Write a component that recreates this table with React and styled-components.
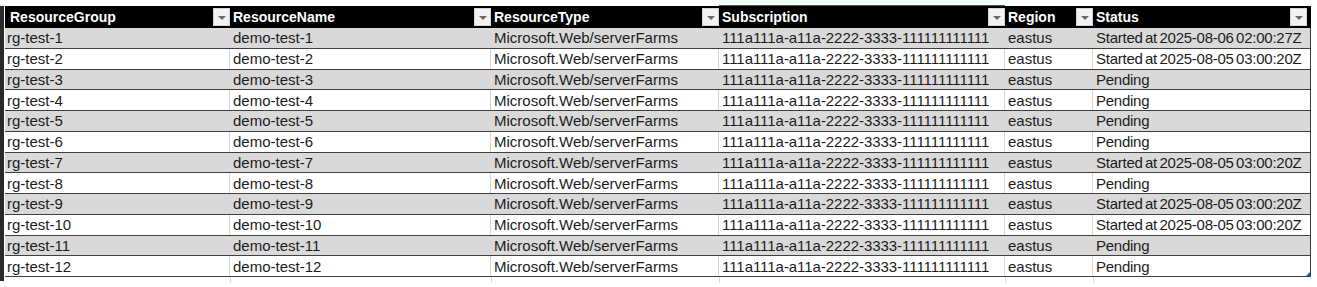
import styled, { createGlobalStyle } from "styled-components";

const COLUMNS = "225px 261px 228px 286px 88px 217px";

const GlobalStyle = createGlobalStyle`
  body {
    margin: 0;
    background: #ffffff;
    font-family: "Liberation Sans", Arial, sans-serif;
  }
`;

const Sheet = styled.div`
  display: flex;
  align-items: flex-start;
  padding-top: 6px;
`;

const RowHeaderEdge = styled.div`
  width: 4px;
  height: 275px;
  margin-right: 1px;
  background: #2a2a2a;
`;

const Table = styled.div`
  display: flex;
  flex-direction: column;
`;

const Body = styled.div`
  display: flex;
  flex-direction: column;
  border-right: 1px solid #3a3a3a;
`;

const HeaderRow = styled.div`
  display: grid;
  grid-template-columns: ${COLUMNS};
  height: 22px;
  background: #000000;
`;

const HeaderCell = styled.div`
  display: flex;
  align-items: center;
  justify-content: space-between;
  padding-left: ${({ $first }) => ($first ? "5px" : "3px")};
  color: #ffffff;
  font-weight: 700;
  font-size: 14px;
  white-space: nowrap;
  box-shadow: ${({ $selected }) => ($selected ? "0 -1px 0 #217346" : "none")};
`;

const FilterButton = styled.span`
  display: flex;
  align-items: center;
  justify-content: center;
  width: 17px;
  height: 18px;
  margin-right: ${({ $last }) => ($last ? "3px" : "0")};
  background: #f2f2f2;
  border: 1px solid #d6d6d6;
  box-sizing: border-box;

  &::after {
    content: "";
    border-left: 4px solid transparent;
    border-right: 4px solid transparent;
    border-top: 4px solid #6b6b6b;
    margin-top: 1px;
  }
`;

const Row = styled.div`
  display: grid;
  grid-template-columns: ${COLUMNS};
  height: 20.75px;
  box-sizing: border-box;
  background: ${({ $band }) => ($band ? "#d9d9d9" : "#ffffff")};
  border-bottom: 1px solid #3f3f3f;
`;

const Cell = styled.div`
  position: relative;
  display: flex;
  align-items: center;
  padding-left: ${({ $first }) => ($first ? "1px" : "3px")};
  font-size: 15px;
  letter-spacing: ${({ $tracking }) => $tracking || "0"};
  word-spacing: ${({ $words }) => $words || "0"};
  color: #1b1b1b;
  white-space: nowrap;
  border-left: 1px solid
    ${({ $band, $first }) => ($first || $band ? "transparent" : "#d4d4d4")};
  margin-left: ${({ $first }) => ($first ? "0" : "-1px")};
`;

const TrailingRow = styled.div`
  display: grid;
  grid-template-columns: ${COLUMNS};
  height: 6px;
`;

const TrailingCell = styled.div`
  border-left: 1px solid ${({ $first }) => ($first ? "transparent" : "#dcdcdc")};
`;

const ResizeHandle = styled.div`
  position: absolute;
  right: 0;
  bottom: 0;
  width: 0;
  height: 0;
  border-left: 4px solid transparent;
  border-bottom: 4px solid #2b579a;
`;

const columns = [
  { title: "ResourceGroup" },
  { title: "ResourceName" },
  { title: "ResourceType" },
  { title: "Subscription", tracking: "-0.05px" },
  { title: "Region" },
  { title: "Status", tracking: "-0.25px", words: "-1.5px" },
];

const statuses = [
  "Started at 2025-08-06 02:00:27Z",
  "Started at 2025-08-05 03:00:20Z",
  "Pending",
  "Pending",
  "Pending",
  "Pending",
  "Started at 2025-08-05 03:00:20Z",
  "Pending",
  "Started at 2025-08-05 03:00:20Z",
  "Started at 2025-08-05 03:00:20Z",
  "Pending",
  "Pending",
];

const rows = statuses.map((status, i) => [
  `rg-test-${i + 1}`,
  `demo-test-${i + 1}`,
  "Microsoft.Web/serverFarms",
  "111a111a-a11a-2222-3333-111111111111",
  "eastus",
  status,
]);

export default function App() {
  return (
    <>
      <GlobalStyle />
      <Sheet>
        <RowHeaderEdge />
        <Table>
          <HeaderRow>
            {columns.map((col, i) => (
              <HeaderCell
                key={col.title}
                $first={i === 0}
                $selected={col.title === "Subscription"}
              >
                {col.title}
                <FilterButton $last={i === columns.length - 1} />
              </HeaderCell>
            ))}
          </HeaderRow>
          <Body>
            {rows.map((row, r) => {
              const band = r % 2 === 0;
              const isLast = r === rows.length - 1;
              return (
                <Row key={r} $band={band}>
                  {row.map((value, c) => (
                    <Cell
                      key={c}
                      $band={band}
                      $first={c === 0}
                      $tracking={columns[c].tracking}
                      $words={columns[c].words}
                    >
                      {value}
                      {isLast && c === row.length - 1 && <ResizeHandle />}
                    </Cell>
                  ))}
                </Row>
              );
            })}
          </Body>
          <TrailingRow>
            {columns.map((col, i) => (
              <TrailingCell key={col.title} $first={i === 0} />
            ))}
          </TrailingRow>
        </Table>
      </Sheet>
    </>
  );
}
